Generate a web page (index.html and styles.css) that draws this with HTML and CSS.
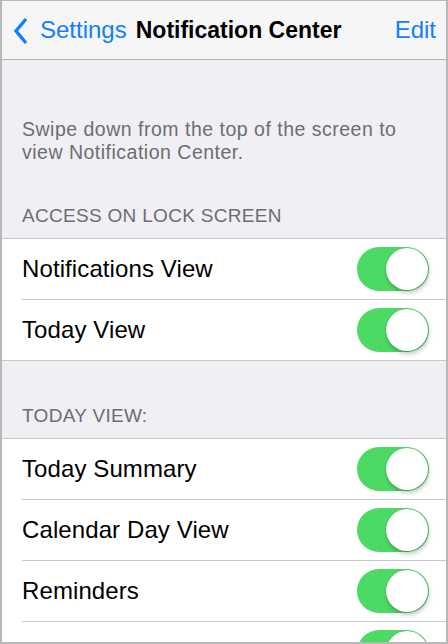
FILE: index.html
```html
<!DOCTYPE html>
<html>
<head>
<meta charset="utf-8">
<link rel="stylesheet" href="styles.css">
</head>
<body>
<div class="screen">
  <div class="nav">
    <div class="back">
      <svg class="chevron" width="16" height="28" viewBox="0 0 16 28"><path d="M13 2 L3 14 L13 26" fill="none" stroke="#157efb" stroke-width="3.4" stroke-linecap="butt" stroke-linejoin="miter"/></svg>
      <span class="back-label">Settings</span>
    </div>
    <div class="title">Notification Center</div>
    <div class="edit">Edit</div>
  </div>
  <div class="content">
    <p class="desc">Swipe down from the top of the screen to view Notification Center.</p>
    <div class="header first">ACCESS ON LOCK SCREEN</div>
    <div class="group">
      <div class="row"><span class="label">Notifications View</span><span class="toggle"><span class="knob"></span></span></div>
      <div class="row"><span class="label">Today View</span><span class="toggle"><span class="knob"></span></span></div>
    </div>
    <div class="header second">TODAY VIEW:</div>
    <div class="group">
      <div class="row"><span class="label">Today Summary</span><span class="toggle"><span class="knob"></span></span></div>
      <div class="row"><span class="label">Calendar Day View</span><span class="toggle"><span class="knob"></span></span></div>
      <div class="row"><span class="label">Reminders</span><span class="toggle"><span class="knob"></span></span></div>
      <div class="row"><span class="label"></span><span class="toggle"><span class="knob"></span></span></div>
    </div>
  </div>
</div>
</body>
</html>
```
FILE: styles.css
```css
html, body {
  margin: 0;
  padding: 0;
}
body {
  font-family: "Liberation Sans", Arial, sans-serif;
  width: 448px;
  height: 644px;
  overflow: hidden;
}
.screen {
  box-sizing: border-box;
  width: 448px;
  height: 644px;
  border-style: solid;
  border-color: #b8b8b8;
  border-width: 1px 2px 2px 2px;
  background: #efeff4;
  overflow: hidden;
  display: flex;
  flex-direction: column;
}
.nav {
  flex: none;
  height: 58px;
  background: #f6f6f7;
  border-bottom: 1px solid #b2b2b2;
  display: flex;
  align-items: center;
  padding: 0 10px 0 11px;
  font-size: 24px;
}
.back {
  display: flex;
  align-items: center;
  color: #157efb;
}
.chevron {
  display: block;
  margin-right: 11px;
  margin-top: 1px;
}
.title {
  font-weight: bold;
  font-size: 23px;
  color: #000;
  margin-left: 9px;
  flex: 1;
}
.edit {
  color: #157efb;
}
.content {
  flex: 1;
}
.desc {
  margin: 0;
  padding: 58px 30px 0 20px;
  font-size: 19.5px;
  letter-spacing: 0.5px;
  line-height: 23px;
  color: #6d6d72;
}
.header {
  padding: 0 20px 12px;
  font-size: 19px;
  letter-spacing: 0.3px;
  line-height: 20px;
  color: #6d6d72;
}
.header.first {
  margin-top: 42px;
}
.header.second {
  margin-top: 45px;
}
.group {
  background: #fff;
  border-top: 1px solid #c8c7cc;
  border-bottom: 1px solid #c8c7cc;
  padding-left: 20px;
}
.row {
  height: 60px;
  display: flex;
  align-items: center;
  justify-content: space-between;
  padding-right: 17px;
  border-bottom: 1px solid #c8c7cc;
}
.row:last-child {
  border-bottom: none;
}
.label {
  font-size: 24px;
  letter-spacing: 0.1px;
  color: #000;
}
.toggle {
  position: relative;
  width: 72px;
  height: 44px;
  border-radius: 22px;
  background: #4cd964;
  flex: none;
}
.knob {
  position: absolute;
  top: 1px;
  right: 1px;
  width: 42px;
  height: 42px;
  border-radius: 50%;
  background: #fff;
  box-shadow: 1px 3px 4px rgba(0,0,0,0.22), 0 0 0 0.5px rgba(0,0,0,0.12);
}
```
